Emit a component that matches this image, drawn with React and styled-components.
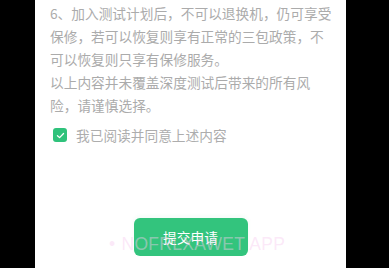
import React from 'react';
import styled, { createGlobalStyle } from 'styled-components';

const GlobalStyle = createGlobalStyle`
  html, body {
    margin: 0;
    padding: 0;
    background: #000;
    height: 100%;
  }
  #root {
    height: 100%;
  }
`;

const Screen = styled.div`
  display: flex;
  height: 268px;
  background: #000;
  overflow: hidden;
`;

const Panel = styled.div`
  position: relative;
  width: 311px;
  margin-left: 35px;
  background: #fff;
  display: flex;
  flex-direction: column;
  padding: 1.5px 0 0 15px;
  box-sizing: border-box;
  font-family: 'Noto Sans CJK SC', 'Noto Sans', sans-serif;
`;

const Notice = styled.div`
  width: 284px;
  font-size: 13.7px;
  line-height: 23.2px;
  color: #ababab;
`;

const Para = styled.p`
  margin: 0;
`;

const AgreeRow = styled.label`
  display: flex;
  align-items: center;
  gap: 9px;
  height: 20px;
  margin: 7.5px 0 0 3px;
  font-size: 13.7px;
  color: #adadad;
`;

const Check = styled.span`
  width: 14px;
  height: 14px;
  border-radius: 3px;
  background: ${({ checked }) => (checked ? '#2fc27b' : '#fff')};
  display: flex;
  align-items: center;
  justify-content: center;
`;

const Footer = styled.div`
  display: flex;
  justify-content: center;
  margin-top: 73px;
  margin-left: -15px;
`;

const SubmitButton = styled.button`
  appearance: none;
  border: none;
  width: 114px;
  height: 38px;
  border-radius: 6px;
  background: #33c47d;
  color: #fff;
  font-family: 'Noto Sans CJK SC', sans-serif;
  font-size: 13.7px;
  padding: 0;
  box-shadow: 0 -2px 4px rgba(49, 194, 124, 0.06);
`;

const Watermark = styled.div`
  position: absolute;
  z-index: 2;
  left: 74px;
  top: 234px;
  font-family: 'Liberation Sans', sans-serif;
  font-size: 17.5px;
  letter-spacing: 0.3px;
  color: rgba(248, 205, 240, 0.45);
  white-space: nowrap;
  pointer-events: none;
`;

const Dot = styled.span`
  margin-right: 6px;
`;

export default function App() {
  return (
    <Screen>
      <GlobalStyle />
      <Panel>
        <Notice>
          <Para>
            6、加入测试计划后，不可以退换机，仍可享受保修，若可以恢复则享有正常的三包政策，不可以恢复则只享有保修服务。
          </Para>
          <Para>以上内容并未覆盖深度测试后带来的所有风险，请谨慎选择。</Para>
        </Notice>
        <AgreeRow>
          <Check checked>
            <svg width="9" height="9" viewBox="0 0 10 10">
              <path
                d="M1.6 5.2 L4 7.4 L8.4 2.8"
                fill="none"
                stroke="#fff"
                strokeWidth="1.4"
                strokeLinecap="round"
                strokeLinejoin="round"
              />
            </svg>
          </Check>
          我已阅读并同意上述内容
        </AgreeRow>
        <Footer>
          <SubmitButton type="button">提交申请</SubmitButton>
        </Footer>
        <Watermark>
          <Dot>•</Dot>NOFRLXAWET APP
        </Watermark>
      </Panel>
    </Screen>
  );
}
